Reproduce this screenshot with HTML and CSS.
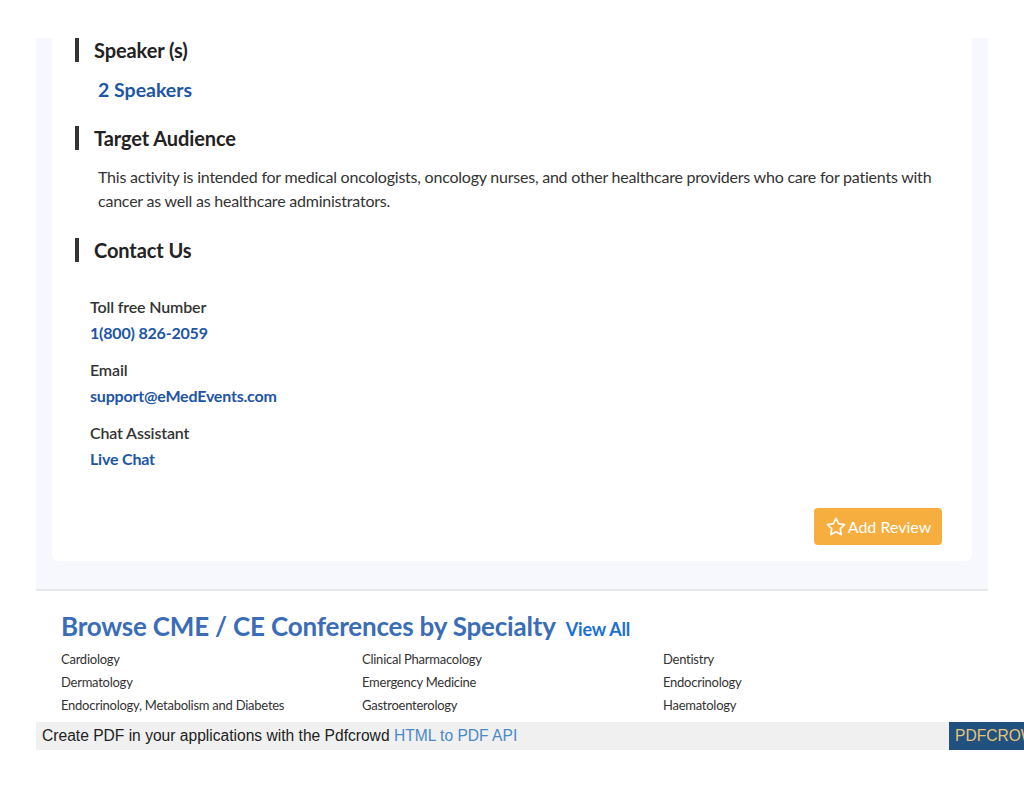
FILE: index.html
```html
<!DOCTYPE html>
<html>
<head>
<meta charset="utf-8">
<link rel="stylesheet" href="styles.css">
</head>
<body>
<div class="panel">
  <div class="card">
    <h3 class="sec-title">Speaker (s)</h3>
    <div class="speakers">2 Speakers</div>
    <h3 class="sec-title sec-gap">Target Audience</h3>
    <p class="audience">This activity is intended for medical oncologists, oncology nurses, and other healthcare providers who care for patients with cancer as well as healthcare administrators.</p>
    <h3 class="sec-title sec-gap2">Contact Us</h3>
    <div class="contact">
      <div class="item"><div class="label">Toll free Number</div><a class="link">1(800) 826-2059</a></div>
      <div class="item"><div class="label">Email</div><a class="link">support@eMedEvents.com</a></div>
      <div class="item"><div class="label">Chat Assistant</div><a class="link">Live Chat</a></div>
    </div>
    <div class="actions">
      <button class="review"><svg class="star" viewBox="0 0 24 24" width="22" height="22"><path d="M12 2.6l2.85 5.85 6.4.93-4.63 4.5 1.1 6.37L12 17.25l-5.72 3 1.1-6.37-4.63-4.5 6.4-.93z" fill="none" stroke="#fff" stroke-width="1.8" stroke-linejoin="round"/></svg>Add Review</button>
    </div>
  </div>
</div>
<div class="browse">
  <div class="browse-head"><h2>Browse CME / CE Conferences by Specialty</h2><a class="view-all">View All</a></div>
  <div class="spec-grid">
    <span>Cardiology</span><span>Clinical Pharmacology</span><span>Dentistry</span>
    <span>Dermatology</span><span>Emergency Medicine</span><span>Endocrinology</span>
    <span>Endocrinology, Metabolism and Diabetes</span><span>Gastroenterology</span><span>Haematology</span>
  </div>
</div>
<div class="pdfbar">
  <span class="pdftext">Create PDF in your applications with the Pdfcrowd <a class="pdflink">HTML to PDF API</a></span>
  <span class="pdflogo">PDFCROWD</span>
</div>
</body>
</html>
```

FILE: styles.css
```css
html, body { margin: 0; padding: 0; background: #fff; overflow: hidden; }
body { font-family: Lato, "Open Sans", sans-serif; color: #333; width: 1024px; }

.panel {
  margin: 38px 0 0 36px;
  width: 920px;
  padding: 0 16px 28px;
  background: #f7f8fd;
  border-bottom: 2px solid #e7e8ed;
}
.card {
  background: #fff;
  border-radius: 0 0 6px 6px;
  padding: 0 30px 16px 0;
  display: flex;
  flex-direction: column;
}
.sec-title {
  margin: 0 0 0 23px;
  border-left: 4px solid #333;
  padding-left: 15px;
  font-size: 20px;
  line-height: 24px;
  font-weight: 700;
  color: #222;
  letter-spacing: -0.1px;
}
.sec-gap { margin-top: 24px; }
.sec-gap2 { margin-top: 25px; }
.speakers {
  margin: 16px 0 0 46px;
  font-size: 19.5px;
  line-height: 24px;
  font-weight: 700;
  color: #2055a4;
}
.audience {
  margin: 15px 0 0 46px;
  font-size: 16px;
  line-height: 24px;
  color: #333;
  letter-spacing: -0.22px;
}
.contact {
  margin: 32px 0 0 38px;
  display: flex;
  flex-direction: column;
  gap: 11px;
}
.item { display: flex; flex-direction: column; }
.label { font-size: 16px; line-height: 26px; font-weight: 600; color: #333; letter-spacing: -0.15px; }
.link { font-size: 16px; line-height: 26px; font-weight: 700; color: #2055a4; letter-spacing: -0.2px; }
.actions { display: flex; justify-content: flex-end; margin-top: 36px; }
.review {
  width: 128px;
  height: 37px;
  background: #f6ae3f;
  border: none;
  border-radius: 4px;
  color: #fff;
  font-family: Lato, sans-serif;
  font-size: 16px;
  display: flex;
  align-items: center;
  justify-content: center;
  gap: 1px;
  padding: 0;
}
.star { display: block; }

.browse { margin-left: 61px; }
.browse-head { display: flex; align-items: baseline; gap: 10px; margin-top: 18px; }
.browse-head h2 {
  margin: 0;
  font-size: 26px;
  line-height: 34px;
  font-weight: 700;
  color: #3a6db6;
  letter-spacing: -0.2px;
}
.view-all { font-size: 18px; font-weight: 700; color: #1a6fd8; letter-spacing: -0.2px; }
.spec-grid {
  display: grid;
  grid-template-columns: 301px 301px 301px;
  font-size: 13px;
  line-height: 23px;
  color: #333;
  margin-top: 5px;
  letter-spacing: -0.25px;
}
.pdfbar {
  margin: 5px 0 0 36px;
  width: 1000px;
  height: 28px;
  background: #f0f0f0;
  display: flex;
  align-items: center;
  justify-content: space-between;
  font-family: "Liberation Sans", Arial, sans-serif;
  font-size: 15.6px;
}
.pdftext { padding-left: 6px; color: #222; }
.pdflink { color: #4a89c8; }
.pdflogo {
  background: #22507f;
  color: #e5c47c;
  height: 28px;
  line-height: 28px;
  width: 81px;
  padding-left: 6px;
  white-space: nowrap;
  overflow: hidden;
}
```
